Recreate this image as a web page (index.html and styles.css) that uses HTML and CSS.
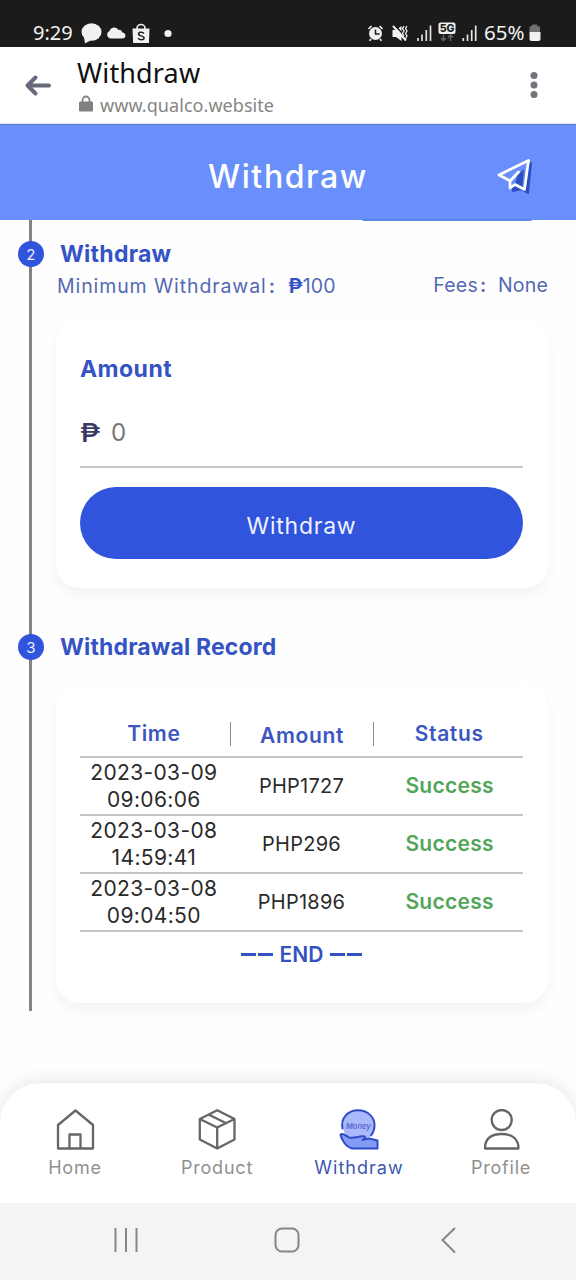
FILE: index.html
```html
<!DOCTYPE html>
<html lang="en">
<head>
<meta charset="utf-8">
<title>Withdraw</title>
<link rel="stylesheet" href="styles.css">
</head>
<body>
<div class="statusbar">
  <span class="clock">9:29</span>
  <svg class="notices" width="100" height="47" viewBox="80 0 100 47">
    <g fill="#f1f1f1">
      <ellipse cx="91.5" cy="32" rx="10" ry="8.8"/>
      <path d="M84 37L85 43.500L93 39Z"/>
      <path d="M110 38.500a4 4 0 0 1-.500-7.500c1-3.500 6.500-5 8.800-1c2-.800 3.500.500 3.800 2.200c4.500.800 4.500 6.300 0 6.300Z"/>
      <path d="M132.500 28.500h17l-.6 14.500h-15.800Z"/>
      <circle cx="168" cy="33.500" r="3.600"/>
    </g>
    <path d="M137 30v-1.500a4 4 0 0 1 8 0V30" fill="none" stroke="#f1f1f1" stroke-width="1.600"/>
    <path d="M144 33.500c-1.500-2-6-1.500-5.500.8c.5 2 5.600 1.200 5.600 3.700c0 2.300-4.500 2.400-6 .3" fill="none" stroke="#222" stroke-width="1.500"/>
  </svg>
  <svg class="signals" width="112" height="47" viewBox="366 0 112 47">
    <circle cx="375.500" cy="33.500" r="6.500" fill="#f1f1f1"/>
    <path d="M368.500 29l3-3M379.500 26l3 3M371 39l-1.500 1.800M380 39l1.500 1.800" stroke="#f1f1f1" stroke-width="1.700"/>
    <path d="M375.500 29.500v4.500h4" fill="none" stroke="#1b1b1b" stroke-width="1.500"/>
    <path d="M392.500 30h3.500l5.500-4v15l-5.500-4h-3.500Z" fill="#f1f1f1"/>
    <path d="M394.500 25l13 14" stroke="#1b1b1b" stroke-width="1.500"/>
    <path d="M393 26L406 40.500" stroke="#f1f1f1" stroke-width="2"/>
    <path d="M404 26l-1.500 2.500l1.500 2.500l-1.500 2.500l1.500 2.500M407 26l-1.500 2.500l1.500 2.500l-1.500 2.500l1.500 2.500l-1.500 2.500" fill="none" stroke="#f1f1f1" stroke-width="1.300"/>
    <path d="M418 41v-3M422 41v-6.500M426.300 41V30M430.500 41V25.500M463.300 41v-3M467.500 41v-6.500M471.700 41V30M475.700 41V25.500" stroke="#e2e2e2" stroke-width="1.700"/>
    <rect x="438.500" y="22.500" width="17" height="11.500" rx="2" fill="#f1f1f1"/>
    <text x="447" y="32" class="network">5G</text>
    <path d="M443.500 34.500v6m-2.500-2.500l2.500 2.500l2.500-2.500M450.500 41v-6m-2.500 2.500l2.500-2.500l2.500 2.500" fill="none" stroke="#666" stroke-width="1.400"/>
  </svg>
  <span class="percent">65%</span>
  <svg width="12" height="47" viewBox="529.500 0 12 47">
    <path d="M530 32v-4.500q0-1.500 1.500-1.500h1v-1.500h5V26h1q2 0 2 1.500V32Z" fill="#707070"/>
    <path d="M530 32h11v7q0 2-2 2h-7q-2 0-2-2Z" fill="#f1f1f1"/>
  </svg>
</div>

<div class="browserbar">
  <svg class="back" width="28" height="24" viewBox="0 0 28 24">
    <path d="M25 12.500H4M11.500 4.500L3.500 12.500l8 8" fill="none" stroke="#676a7c" stroke-width="4" stroke-linecap="round" stroke-linejoin="round"/>
  </svg>
  <div class="page">
    <div class="page-title">Withdraw</div>
    <div class="page-url">
      <svg width="14" height="17" viewBox="0 0 14 17">
        <path d="M3.500 7V5a3.500 3.500 0 0 1 7 0v2" fill="none" stroke="#808080" stroke-width="1.800"/>
        <rect x="0" y="6.500" width="14" height="10" rx="1.200" fill="#808080"/>
      </svg>
      <span>www.qualco.website</span>
    </div>
  </div>
  <svg class="more" width="8" height="28" viewBox="0 0 8 28" fill="#72747c">
    <circle cx="4" cy="4.500" r="3.500"/><circle cx="4" cy="14" r="3.500"/><circle cx="4" cy="23.500" r="3.500"/>
  </svg>
</div>

<header class="header">
  <h1 class="header-title">Withdraw</h1>
  <svg class="plane" width="38" height="40" viewBox="496 157 38 40" fill="none" stroke-linejoin="round" stroke-linecap="round">
    <path d="M531 163L528 193L521 189L513 191V184Z" fill="#2d4fc4" stroke="#2d4fc4" stroke-width="2"/>
    <path d="M528.500 160.500L499 175l10 5.500L509.500 188l4.500-4.500L524.500 189.500Z" fill="#6a90fd"/>
    <path d="M518 175L524 169L522.500 187L515 183Z" fill="#2d4fc4"/>
    <path d="M509.500 180.500L499 175L528.500 160.500L524.500 189.500L515 184.500L510 188V181L518.500 172" stroke="#fff" stroke-width="2.700"/>
  </svg>
  <span class="scrolled-button"></span>
</header>

<main class="timeline">
  <section class="step">
    <h2 class="step-title"><span class="badge">2</span>Withdraw</h2>
    <div class="info">
      <span class="minimum">Minimum Withdrawal<span class="colon">:</span><b class="peso">₱</b><span class="hundred">100</span></span>
      <span class="fees">Fees<span class="colon">:</span>None</span>
    </div>
    <div class="card amount-card">
      <div class="amount-label">Amount</div>
      <div class="amount-input"><span class="currency">₱</span><span class="value">0</span></div>
      <div class="submit">Withdraw</div>
    </div>
  </section>
  <section class="step record">
    <h2 class="step-title record-title"><span class="badge">3</span>Withdrawal Record</h2>
    <div class="card record-card">
      <div class="row head"><span>Time</span><span class="middle">Amount</span><span>Status</span></div>
      <div class="row"><span class="time">2023-03-09<br>09:06:06</span><span>PHP1727</span><span class="success">Success</span></div>
      <div class="row"><span class="time">2023-03-08<br>14:59:41</span><span>PHP296</span><span class="success">Success</span></div>
      <div class="row"><span class="time">2023-03-08<br>09:04:50</span><span>PHP1896</span><span class="success">Success</span></div>
      <div class="end"><i class="dash"></i><i class="dash"></i><span>END</span><i class="dash"></i><i class="dash"></i></div>
    </div>
  </section>
</main>

<nav class="tabs">
  <div class="tab">
    <svg width="42" height="42" viewBox="54 1109 42 42" fill="none" stroke="#666" stroke-width="2.300" stroke-linejoin="round">
      <path d="M58 1148.500V1125L75.500 1110.500L93 1125v23.500ZM69.500 1148.500V1134.500h11v14"/>
    </svg>
    <span class="home">Home</span>
  </div>
  <div class="tab">
    <svg width="42" height="42" viewBox="196 1109 42 42" fill="none" stroke="#666" stroke-width="2.300" stroke-linejoin="round">
      <path d="M217.200 1110.200L234.500 1119V1139.500L217.200 1148.500L199.800 1139.500V1119ZM199.800 1119L217.200 1127.500L234.500 1119M217.200 1127.500V1148.500M208.500 1114.500L225.800 1123"/>
    </svg>
    <span class="product">Product</span>
  </div>
  <div class="tab active">
    <svg width="42" height="42" viewBox="338 1109 42 42" fill="none" stroke-linejoin="round" stroke-linecap="round">
      <circle cx="358.500" cy="1126" r="15.500" fill="#aab9fb"/>
      <path d="M342.500 1128.500C340.500 1118 348 1110.300 358 1110.300C368.500 1110.300 375 1118 374.500 1126C374.300 1130 373 1133 371 1135.500" stroke="#304cc6" stroke-width="2"/>
      <path d="M340.500 1134.500C343 1132.500 346 1136 349 1137.500C353 1138.500 357 1137 360 1136.500C362 1136 366 1136 365 1138L362.500 1140L369 1138.500L377.500 1140.500V1148.500H352C346 1147 341.500 1140 340.500 1134.500Z" fill="#819bf7" stroke="#304cc6" stroke-width="2"/>
      <text x="358.300" y="1128.500" class="coin-text">Money</text>
    </svg>
    <span class="withdraw">Withdraw</span>
  </div>
  <div class="tab">
    <svg width="42" height="42" viewBox="480 1109 42 42" fill="none" stroke="#666" stroke-width="2.300" stroke-linejoin="round">
      <circle cx="501.700" cy="1120" r="10"/>
      <path d="M485 1148.500C485 1139 491 1134 501.700 1134C512 1134 518.500 1139 518.500 1148.500Z"/>
    </svg>
    <span class="profile">Profile</span>
  </div>
</nav>

<footer class="system">
  <svg width="576" height="77" viewBox="0 1203 576 77" fill="none" stroke="#858585" stroke-width="2">
    <path d="M115.500 1228v24M126 1228v24M136.500 1228v24"/>
    <rect x="275.500" y="1228.500" width="23" height="23" rx="6.500"/>
    <path d="M455 1228L442.500 1240L455 1252.500"/>
  </svg>
</footer>
</body>
</html>
```

FILE: styles.css
```css
* { box-sizing: border-box; }
body {
  margin: 0;
  width: 576px;
  height: 1280px;
  overflow: hidden;
  display: flex;
  flex-direction: column;
  background: #fefefe;
  font-family: Inter, "Noto Sans", sans-serif;
}
svg { display: block; flex: none; }
h1, h2 { margin: 0; }

.statusbar {
  flex: none;
  height: 47px;
  display: flex;
  background: #1b1b1b;
  color: #f1f1f1;
  font: 20.5px/66px "Noto Sans", sans-serif;
  padding-left: 33px;
}
.clock { width: 47px; font-size: 20px; }
.signals { margin-left: 186px; }
.percent { width: 45px; margin-left: 6px; line-height: 65px; }
.network { font: 800 10.5px Inter, sans-serif; fill: #1b1b1b; text-anchor: middle; }

.browserbar {
  flex: none;
  height: 77px;
  display: flex;
  align-items: center;
  background: #fff;
  border-bottom: 1px solid #e4ebf8;
}
.back { margin-left: 24px; }
.page { width: 300px; margin-left: 25px; padding-top: 8px; font-family: "Noto Sans", sans-serif; }
.page-title { font-size: 27px; line-height: 32px; color: #111; letter-spacing: .15px; }
.page-url { display: flex; gap: 7px; align-items: center; padding-left: 2px; font-size: 18px; line-height: 32px; color: #858585; letter-spacing: .05px; }
.page-url svg { margin-top: -3px; }
.more { margin-left: 153px; }

.header {
  position: relative;
  flex: none;
  height: 96px;
  display: flex;
  align-items: center;
  background: #688ffc;
  border-top: 1px solid #5c7cd0;
  color: #fff;
}
.header-title { width: 288px; margin-left: 208px; padding-top: 9px; font-size: 32px; font-weight: 450; line-height: 40px; letter-spacing: 1.6px; }
.plane { margin-top: 9px; }
.scrolled-button { position: absolute; left: 362px; bottom: -1px; width: 170px; height: 2px; background: #5b88e8; border-radius: 0 0 12px 12px; }

.timeline {
  flex: none;
  height: 791px;
  margin-left: 29px;
  padding: 20px 28px 0 24px;
  border-left: 3px solid #838383;
}
.step-title { position: relative; padding-left: 4px; font-size: 23px; line-height: 29px; height: 28px; font-weight: 700; color: #3453c4; letter-spacing: .25px; }
.record-title { letter-spacing: .15px; }
.badge {
  position: absolute;
  left: -38px;
  top: 1px;
  width: 26px;
  height: 26px;
  border-radius: 50%;
  background: #3054db;
  color: #e8edff;
  font-size: 15px;
  line-height: 28px;
  font-weight: 400;
  text-align: center;
}
.info { display: flex; justify-content: space-between; height: 28px; margin-top: 4px; font-size: 19.5px; line-height: 29px; color: #5468b4; }
.info > span { display: flex; white-space: nowrap; }
.minimum { padding-left: 1px; letter-spacing: .9px; }
.fees { margin-top: -1px; letter-spacing: .2px; }
.colon { width: 20px; padding-left: 2px; font-weight: 600; }
.minimum .colon { width: 21px; }
.peso { width: 15px; font-weight: 600; color: #3453c4; letter-spacing: 0; transform: scaleX(1.1); transform-origin: left; }
.hundred { letter-spacing: .2px; }

.card { border-radius: 24px; background: #fff; box-shadow: 0 8px 14px rgba(0,0,0,.045); }
.amount-card { height: 268px; margin-top: 20px; padding: 34px 25px 0 24px; }
.amount-label { height: 28px; font-size: 23px; line-height: 30px; font-weight: 700; color: #3453c4; letter-spacing: .45px; }
.amount-input { display: flex; align-items: center; height: 72px; margin-top: 14px; padding-top: 2px; border-bottom: 2px solid #c9c9c9; }
.currency { width: 17px; margin-right: 14px; font-size: 26px; font-weight: 500; color: #3b3863; transform: scaleX(1.15); transform-origin: left; }
.value { font-size: 24px; color: #777; }
.submit { height: 72px; margin-top: 19px; border-radius: 36px; background: #3054dc; color: #eef2ff; font-size: 23px; line-height: 78px; text-align: center; letter-spacing: .75px; }

.record { margin-top: 45px; }
.record-card { height: 319px; margin-top: 23px; padding: 28px 25px 0 24px; }
.row { display: grid; grid-template-columns: repeat(3, 1fr); align-items: center; height: 58px; border-bottom: 2px solid #c4c4c4; text-align: center; font-size: 20px; line-height: 26.5px; color: #2a2a2a; letter-spacing: .25px; }
.head { height: 46px; font-size: 21px; line-height: 28px; font-weight: 600; color: #3b56c0; letter-spacing: .65px; }
.middle { height: 24px; margin: 0 1px 0 2px; border: solid #8b8b8b; border-width: 0 1.5px; }
.time { padding-top: 1px; font-size: 21px; letter-spacing: .35px; }
.success { padding-left: 1px; font-size: 21px; font-weight: 600; color: #52a557; letter-spacing: .3px; }
.end { display: flex; align-items: center; justify-content: center; height: 28px; margin-top: 8px; font-size: 21px; font-weight: 600; color: #3453c0; }
.end span { margin: 0 6px; }
.dash { width: 15px; height: 3px; margin: 0 1px; background: #3453c0; }

.tabs {
  flex: none;
  display: flex;
  height: 120px;
  margin-top: 72px;
  padding: 26px 4px 0;
  border-radius: 40px 40px 0 0;
  background: #fff;
  box-shadow: 0 -4px 16px rgba(0,0,0,.08);
}
.tab { width: 142px; display: flex; flex-direction: column; align-items: center; color: #909090; font-size: 18px; line-height: 33px; }
.tab span { letter-spacing: .8px; }
.active { color: #4058b0; }
.tab .withdraw { letter-spacing: 1px; }
.coin-text { font: italic 600 7.5px Inter, sans-serif; fill: #5368d2; text-anchor: middle; }

.system { flex: none; height: 77px; background: #f4f4f4; }
```
